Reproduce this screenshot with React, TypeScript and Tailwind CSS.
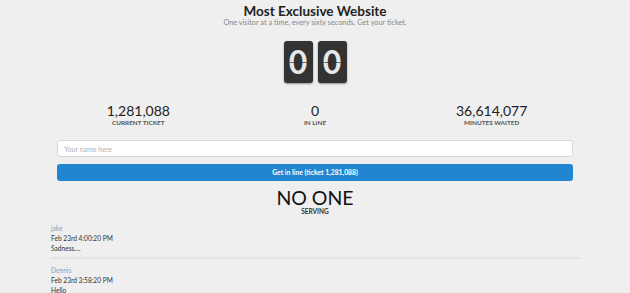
import { JSX } from "react"

const stats = [
  { value: "1,281,088", label: "Current Ticket" },
  { value: "0", label: "In Line" },
  { value: "36,614,077", label: "Minutes Waited" },
]

const comments = [
  { name: "jake", date: "Feb 23rd 4:00:20 PM", text: "Sadness...." },
  { name: "Dennis", date: "Feb 23rd 3:58:20 PM", text: "Hello" },
]

function FlipDigit({ digit }: { digit: string }): JSX.Element {
  return (
    <div className="relative flex h-[42px] w-[29px] items-center justify-center rounded-[3px] bg-[#333333] shadow-[0_1px_2px_rgba(0,0,0,0.4)]">
      <span className="text-[32px] font-bold leading-none text-[#e8e8e8]">{digit}</span>
      <div className="absolute left-0 right-0 top-1/2 h-px bg-[#2a2a2a]/60" />
    </div>
  )
}

export default function App(): JSX.Element {
  return (
    <div className="min-h-[293px] bg-[#efefef] font-['Lato',sans-serif] text-[#222222]">
      <div className="mx-auto w-[530px] pt-[4px]">
        <h1 className="text-center text-[13.5px] font-bold leading-[15px] text-[#222222]">Most Exclusive Website</h1>
        <p className="text-center text-[7.3px] leading-[8px] text-[#888888]">
          One visitor at a time, every sixty seconds. Get your ticket.
        </p>

        <div className="mt-[14px] flex justify-center gap-[5px]">
          <FlipDigit digit="0" />
          <FlipDigit digit="0" />
        </div>

        <div className="mt-[20px] grid grid-cols-3">
          {stats.map((s) => (
            <div key={s.label} className="flex flex-col items-center">
              <span className="text-[14px] leading-[16px] text-[#222222]">{s.value}</span>
              <span className="text-[6.4px] font-bold uppercase leading-[8px] text-[#555555]">{s.label}</span>
            </div>
          ))}
        </div>

        <div className="mx-[7px] mt-[13px] flex flex-col gap-[7px]">
          <input
            className="h-[17px] w-full rounded-[3px] border border-[#d4d8dc] bg-white px-[6px] text-[7px] outline-none placeholder:text-[#b0b0b0]"
            placeholder="Your name here"
          />
          <button className="h-[17px] w-full rounded-[3px] bg-[#2185d0] text-[6.8px] font-bold text-white">
            Get in line (ticket 1,281,088)
          </button>
        </div>

        <div className="mt-[7px] flex flex-col items-center">
          <span className="text-[19.5px] leading-[20px] text-[#111111]">NO ONE</span>
          <span className="text-[6.5px] font-bold uppercase leading-[8px] text-[#333333]">Serving</span>
        </div>

        <div className="mt-[6px] flex flex-col">
          {comments.map((c, i) => (
            <div key={c.name} className={`pb-[4px] pl-[1px] ${i > 0 ? "border-t-2 border-[#e4e4e4] pt-[6px]" : "pt-[1px]"}`}>
              <div className="text-[6.6px] leading-[10px] text-[#8ea0b8]">{c.name}</div>
              <div className="text-[6.6px] leading-[10px] text-[#333333]">{c.date}</div>
              <div className="text-[6.6px] leading-[10px] text-[#333333]">{c.text}</div>
            </div>
          ))}
        </div>
      </div>
    </div>
  )
}
